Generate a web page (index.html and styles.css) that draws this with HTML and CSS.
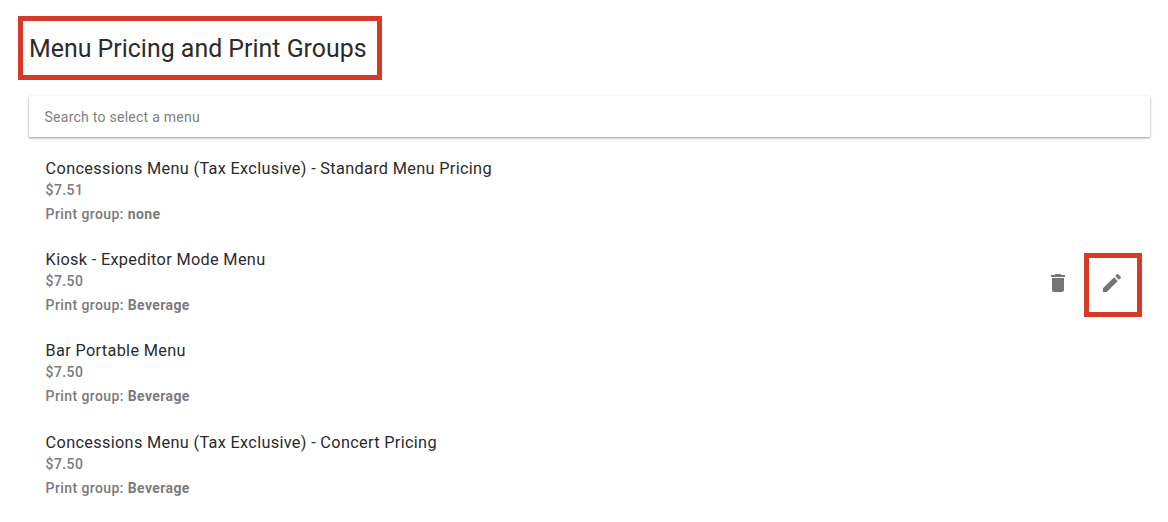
FILE: index.html
```html
<!DOCTYPE html>
<html lang="en">
<head>
<meta charset="utf-8">
<title>Menu Pricing and Print Groups</title>
<link rel="stylesheet" href="styles.css">
</head>
<body>
<main class="page">
  <h1 class="title">Menu Pricing and Print Groups</h1>
  <input class="search" type="text" placeholder="Search to select a menu">
  <ul class="list">
    <li class="item"><div class="info"><div class="name">Concessions Menu (Tax Exclusive) - Standard Menu Pricing</div><div class="price">$7.51</div><div class="group">Print group: <b>none</b></div></div></li>
    <li class="item"><div class="info"><div class="name">Kiosk - Expeditor Mode Menu</div><div class="price">$7.50</div><div class="group">Print group: <b>Beverage</b></div></div>
      <div class="actions">
        <button class="icon-btn" aria-label="Delete"><svg class="icon" viewBox="0 0 24 24"><path d="M6 19c0 1.1.9 2 2 2h8c1.100 0 2-.9 2-2V7H6v12zM19 4h-3.500l-1-1h-5l-1 1H5v2h14V4z"/></svg></button>
        <button class="icon-btn marked" aria-label="Edit"><svg class="icon" viewBox="0 0 24 24"><path d="M3 17.250V21h3.750L17.810 9.940l-3.750-3.750L3 17.250zM20.710 7.040c.39-.39.39-1.020 0-1.410l-2.340-2.340c-.39-.39-1.020-.39-1.410 0l-1.830 1.830 3.750 3.750 1.830-1.830z"/></svg></button>
      </div></li>
    <li class="item"><div class="info"><div class="name">Bar Portable Menu</div><div class="price">$7.50</div><div class="group">Print group: <b>Beverage</b></div></div></li>
    <li class="item"><div class="info"><div class="name">Concessions Menu (Tax Exclusive) - Concert Pricing</div><div class="price">$7.50</div><div class="group">Print group: <b>Beverage</b></div></div></li>
  </ul>
</main>
</body>
</html>
```
FILE: styles.css
```css
* { box-sizing: border-box; }
body { margin: 0; background: #fff; font-family: Roboto, sans-serif; color: #2b2b2b; }
.page { display: flex; flex-direction: column; padding: 16px 18px 0; }
.title { align-self: flex-start; width: 364px; height: 64px; margin: 0; padding-left: 6px; border: 5px solid #d63b28; font-size: 24.920px; font-weight: 400; line-height: 56px; white-space: nowrap; }
.search { width: 1121px; height: 41px; margin: 16px 0 0 11px; padding: 0 15.500px; border: 0; border-radius: 1px; background: #fff; box-shadow: 0 1px 3px rgba(0,0,0,.25), 0 1px 2px rgba(0,0,0,.2); font: 400 14px Roboto, sans-serif; letter-spacing: .26px; }
.search::placeholder { color: #808080; opacity: 1; }
.list { list-style: none; margin: 16.600px 0 0; padding: 0 8px 0 27.600px; }
.item { display: flex; height: 91.400px; }
.info { flex: 1; }
.name { padding-top: 1px; font-size: 16.300px; line-height: 27px; letter-spacing: .325px; }
.price, .group { font-size: 14px; font-weight: 500; letter-spacing: .4px; color: #7b7b7b; }
.price { line-height: 16px; }
.group { line-height: 32px; }
.group b { font-weight: 700; }
.actions { display: flex; margin-top: 7px; }
.icon-btn { display: flex; align-items: center; justify-content: center; width: 52px; height: 64px; margin-top: 1px; padding: 0 0 4px; border: 0; background: none; }
.marked { width: 58px; padding-right: 2px; border: 5px solid #d63b28; }
.icon { width: 24px; height: 24px; fill: #757575; }
```
